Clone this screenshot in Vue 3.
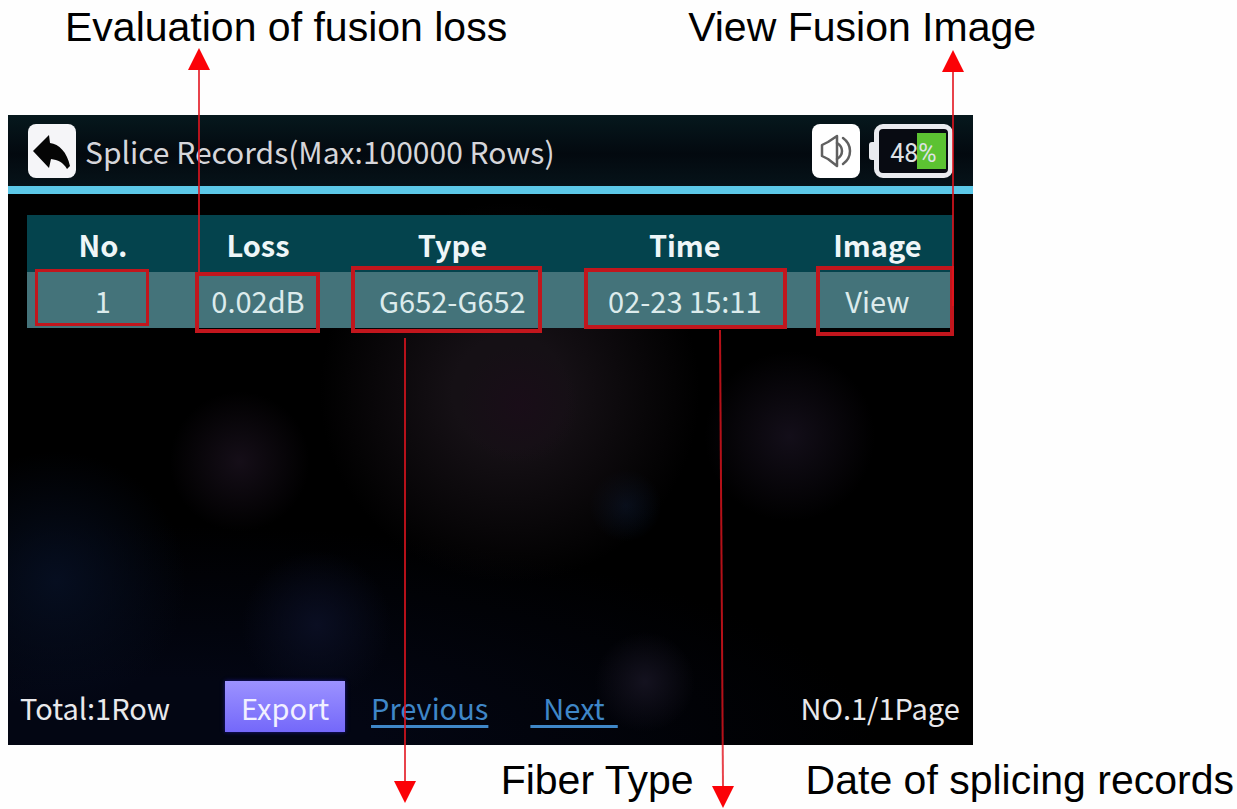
<script setup>
const columns = [
  { key: 'no', label: 'No.' },
  { key: 'loss', label: 'Loss' },
  { key: 'type', label: 'Type' },
  { key: 'time', label: 'Time' },
  { key: 'image', label: 'Image' },
]
const rows = [{ no: '1', loss: '0.02dB', type: 'G652-G652', time: '02-23 15:11', image: 'View' }]
</script>

<template>
  <main class="figure">
    <div class="notes notes-top">
      <p>Evaluation of fusion loss</p>
      <p>View Fusion Image</p>
    </div>

    <section class="device">
      <header class="bar">
        <button class="tile" type="button" aria-label="Back">
          <svg width="40" height="40" viewBox="0 0 40 40" aria-hidden="true">
            <path d="M1 20L17 4l1 8C27 13 35 21 38 35l-3 3C31 31 26 29 19 28l-2 9z" fill="#050505" />
          </svg>
        </button>
        <h1>Splice Records(Max:100000 Rows)</h1>
        <button class="tile tile-sound" type="button" aria-label="Sound">
          <svg width="34" height="36" viewBox="0 0 34 36" fill="none" stroke="#606060" stroke-width="2.500" stroke-linejoin="round" stroke-linecap="round" aria-hidden="true">
            <path d="M3 12v11l6 3 9 7V3L9 9z" />
            <path d="M18 10q5 3 5 8t-5 8M24 5q7 5 7 13t-7 13" />
          </svg>
        </button>
        <div class="battery"><span>48%</span></div>
      </header>

      <table>
        <thead>
          <tr>
            <th v-for="c in columns" :key="c.key" :class="c.key" scope="col">{{ c.label }}</th>
          </tr>
        </thead>
        <tbody>
          <tr v-for="row in rows" :key="row.no">
            <td v-for="c in columns" :key="c.key">
              <a v-if="c.key === 'image'" href="#view">{{ row.image }}</a>
              <template v-else>{{ row[c.key] }}</template>
              <span class="mark" :class="'mark-' + c.key"></span>
              <svg v-if="c.key === 'loss'" class="arrow arrow-loss" width="24" height="224" viewBox="0 0 24 224" aria-hidden="true">
                <path class="line" d="M12 20V224" />
                <path class="head" d="M12 0L23 22H1z" />
              </svg>
              <svg v-if="c.key === 'type'" class="arrow arrow-type" width="24" height="465" viewBox="0 0 24 465" aria-hidden="true">
                <path class="line" d="M12 0V444" />
                <path class="head" d="M12 465L23 443H1z" />
              </svg>
              <svg v-if="c.key === 'time'" class="arrow arrow-time" width="24" height="478" viewBox="0 0 24 478" aria-hidden="true">
                <path class="line" d="M9 0L12 458" />
                <path class="head" d="M12 478L23 456H1z" />
              </svg>
              <svg v-if="c.key === 'image'" class="arrow arrow-image" width="24" height="256" viewBox="0 0 24 256" aria-hidden="true">
                <path class="line" d="M12 20V256" />
                <path class="head" d="M12 0L23 22H1z" />
              </svg>
            </td>
          </tr>
        </tbody>
      </table>

      <footer class="pager">
        <span class="total">Total:1Row</span>
        <button class="export" type="button">Export</button>
        <a href="#previous">Previous</a>
        <a class="next" href="#next">&nbsp;&nbsp;Next&nbsp;&nbsp;</a>
        <span class="page">NO.1/1Page</span>
      </footer>
    </section>

    <div class="notes notes-bottom">
      <p>Fiber Type</p>
      <p>Date of splicing records</p>
    </div>
  </main>
</template>

<style>
body {
  margin: 0;
  background: #fefefe;
}
</style>

<style scoped>
.figure {
  overflow: hidden;
}
.notes {
  display: flex;
  font: 41px/48px "Liberation Sans", Arial, sans-serif;
  color: #000;
  white-space: nowrap;
}
.notes p {
  margin: 0;
}
.notes-top {
  padding: 3px 0 64px 65px;
  gap: 181px;
}
.notes-bottom {
  justify-content: flex-end;
  padding: 11px 3px 5px 0;
  gap: 112px;
}
.device {
  box-sizing: border-box;
  width: 78%;
  min-height: 630px;
  margin-left: 8px;
  display: flex;
  flex-direction: column;
  font: 29px/42px "Noto Sans CJK SC", "Noto Sans", sans-serif;
  color: #e9e9ec;
  background:
    radial-gradient(circle 60px at 53% 46%, #190d18, transparent),
    radial-gradient(circle 190px at 52% 44%, #151015 30%, transparent),
    radial-gradient(circle 70px at 24% 55%, #150e18, transparent),
    radial-gradient(circle 85px at 81% 51%, #130e19, transparent),
    radial-gradient(circle 36px at 64% 62%, #060e1c, transparent),
    radial-gradient(circle 50px at 66% 90%, #14121f, transparent),
    radial-gradient(circle 75px at 32% 81%, #0a0e22, transparent),
    radial-gradient(circle 130px at 5% 74%, #060e20, transparent),
    radial-gradient(ellipse 75% 35% at 15% 100%, #030613 30%, transparent),
    #000;
}
.bar {
  display: flex;
  align-items: center;
  height: 71px;
  padding: 0 20px;
  border-bottom: 8px solid #5cc8e8;
  background: linear-gradient(#06181d, #03090f 55%, #061319);
}
h1 {
  flex: 1;
  margin: 0 0 0 9px;
  font-size: 30px;
  font-weight: 400;
  white-space: nowrap;
  color: #d6d6da;
}
.tile {
  display: flex;
  align-items: center;
  justify-content: center;
  width: 48px;
  height: 54px;
  padding: 0;
  border: 0;
  border-radius: 8px;
  background: #f5f5f8;
}
.tile-sound {
  margin-right: 14px;
  background: #fff;
}
.battery {
  position: relative;
  box-sizing: border-box;
  width: 79px;
  height: 54px;
  border: 5px solid #e9ebef;
  border-radius: 9px;
  padding: 4px 2px;
  background: linear-gradient(90deg, transparent 55%, #5cc232 55%) content-box, #080b12;
  font: 25px/42px Roboto, sans-serif;
  color: #dfe2e6;
  text-align: center;
}
.battery span {
  display: block;
}
.battery::before {
  content: "";
  position: absolute;
  left: -10px;
  top: 13px;
  width: 5px;
  height: 18px;
  border-radius: 3px 0 0 3px;
  background: #e9ebef;
}
table {
  margin: 21px 20px 0 19px;
  border-collapse: collapse;
  table-layout: fixed;
  text-align: center;
}
th,
td {
  height: 56px;
  padding: 0;
  white-space: nowrap;
}
th {
  height: 57px;
  font-weight: 700;
  color: #eef6f8;
  background: #04434d;
}
td {
  position: relative;
  color: #dcebec;
  background: #44737a;
}
td a {
  color: inherit;
  text-decoration: none;
}
.no { width: 16.4%; }
.loss { width: 17.1%; }
.type { width: 24.9%; }
.time { width: 25.3%; }
.image { width: 16.3%; }

/* Callout frames and arrows lie over the table cells they point at. */
.mark {
  position: absolute;
  border: 4px solid #c2161d;
  pointer-events: none;
}
.mark-no { inset: -3px 30px 2px 8px; border-width: 3px; }
.mark-loss { inset: 0 17px -5px 16px; }
.mark-type { inset: -6px 26px -5px 14px; }
.mark-time { inset: -4px 15px -1px 16px; }
.mark-image { inset: -6px -1px -8px 14px; }
.arrow {
  position: absolute;
  z-index: 1;
  pointer-events: none;
}
.arrow-loss { left: 8px; bottom: 56px; }
.arrow-type { left: 56px; top: 66px; }
.arrow-time { left: 143px; top: 58px; }
.arrow-image { right: -12px; bottom: 22px; }
.line {
  fill: none;
  stroke: #e2141e;
  stroke-width: 2;
  opacity: 0.8;
}
.head {
  fill: #fb0207;
}
.pager {
  display: flex;
  align-items: center;
  margin-top: auto;
  padding: 0 13px 13px 12px;
  white-space: nowrap;
}
.export {
  width: 120px;
  height: 51px;
  margin: 0 26px 0 55px;
  padding: 0;
  border: 0;
  font: inherit;
  color: #f1f0ff;
  background: linear-gradient(#9c92ff, #7468fa);
  box-shadow: 0 0 4px #1b1690;
}
.pager a {
  color: #3f87c8;
  text-underline-offset: 5px;
  text-decoration-thickness: 3px;
  text-decoration-skip-ink: none;
}
.pager .next {
  margin-left: 42px;
}
.page {
  margin-left: auto;
}
</style>
